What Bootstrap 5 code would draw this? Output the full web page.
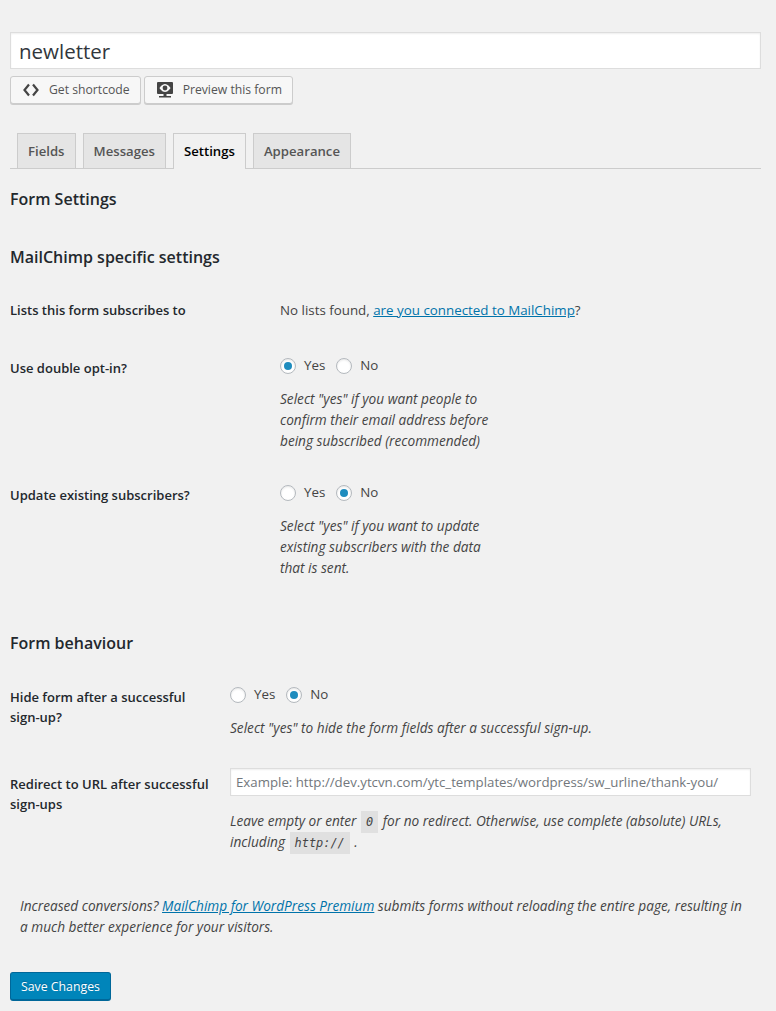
<!DOCTYPE html>
<html lang="en"><head><meta charset="utf-8"><title>Form settings</title>
<link rel="stylesheet" href="https://cdn.jsdelivr.net/npm/bootstrap@5.3.0/dist/css/bootstrap.min.css">
<style>
html,body{background:#f1f1f1}
body{font-family:"Open Sans","Noto Sans",sans-serif;font-size:13.35px;line-height:21px;color:#444;overflow:hidden}
.wrapx{padding:32px 15px 0 10px;height:1011px}
.titlebox{display:block;width:100%;height:37px;border:1px solid #ddd;background:#fff;font-size:20.500px;line-height:26px;padding:3px 8px;color:#32373c;box-shadow:inset 0 1px 2px rgba(0,0,0,.07);outline:0}
.wpbtn{height:28px;background:#f7f7f7;border:1px solid #ccc;border-radius:3px;box-shadow:0 1px 0 #ccc;color:#555;font-size:12.200px;line-height:26px;padding:0 10px 0 12px;display:inline-flex;align-items:center}
.wpbtn svg{margin-right:10px;flex:none}
.tabbar{margin-top:29px;border-bottom:1px solid #ccc;padding-left:7px;height:36px;gap:7px}
.tabx{height:35px;border:1px solid #ccc;border-bottom:0;background:#e5e5e5;color:#555;font-weight:600;font-size:13.170px;line-height:34px;padding:0 10px;text-decoration:none}
.tabx.on{background:#f1f1f1;color:#000;height:36px;position:relative;z-index:1}
h3.headx{font-size:16px;line-height:22px;font-weight:600;color:#23282d;margin:0}
.rowx{display:flex}
.lblx{width:270px;flex:none;font-weight:600;color:#23282d;font-size:13px;line-height:20px}
.lblx.narrow{width:220px}
.hintx{font-style:italic;color:#444;margin:0;line-height:21px;font-size:13.650px}
.radx{display:inline-flex;align-items:center;margin-right:11px}
.dotx{width:16px;height:16px;border:1px solid #b4b9be;border-radius:50%;background:#fff;box-shadow:inset 0 1px 2px rgba(0,0,0,.1);margin-right:8px;display:flex;align-items:center;justify-content:center;flex:none}
.dotx.sel::after{content:"";width:8px;height:8px;border-radius:50%;background:#1e8cbe}
a.lnkx{color:#0073aa;text-decoration:underline}
.codex{font-family:"DejaVu Sans Mono","Liberation Mono",monospace;font-size:11.900px;line-height:1;background:rgba(0,0,0,.07);color:#444;padding:4px 5px;margin:0 1px}
.urlx{display:block;width:521px;height:28px;border:1px solid #ddd;background:#fff;padding:2px 5px;font-size:13.250px;font-family:inherit;box-shadow:inset 0 1px 2px rgba(0,0,0,.07);outline:0}
.urlx::placeholder{color:#72777c;opacity:1}
.savex{height:29px;background:#0085ba;border:1px solid #006799;border-bottom-width:2px;border-radius:3px;color:#fff;font-size:12.300px;line-height:25px;padding:0 10px;text-shadow:0 -1px 1px #006799}
</style></head><body>
<div class="wrapx">
<input class="titlebox" value="newletter" aria-label="Form title">
<div class="d-flex" style="gap:3px;margin-top:7px">
<button class="wpbtn" type="button"><svg width="16" height="14" viewBox="0 0 16 14"><path d="M6 1.500 1.500 7 6 12.500M10 1.500 14.500 7 10 12.500" fill="none" stroke="#444" stroke-width="2.200"/></svg>Get shortcode</button>
<button class="wpbtn" type="button"><svg width="16" height="16" viewBox="0 0 16 16"><path fill="#444" d="M1 0h14a1 1 0 0 1 1 1v10a1 1 0 0 1-1 1H1a1 1 0 0 1-1-1V1a1 1 0 0 1 1-1zM6.500 12h3v2h-3zM2 14h12v1.500H2z"/><path fill="#f7f7f7" d="M8 2C4.800 2 2.500 6 2.500 6S4.800 10 8 10s5.500-4 5.500-4S11.200 2 8 2z"/><circle cx="8" cy="6" r="2.400" fill="#444"/></svg>Preview this form</button>
</div>
<nav class="d-flex tabbar">
<a class="tabx" href="#">Fields</a><a class="tabx" href="#">Messages</a><a class="tabx on" href="#">Settings</a><a class="tabx" href="#">Appearance</a>
</nav>
<h3 class="headx" style="margin-top:19px">Form Settings</h3>
<h3 class="headx" style="margin-top:36px">MailChimp specific settings</h3>
<div class="rowx" style="margin-top:32px"><div class="lblx">Lists this form subscribes to</div><div>No lists found, <a class="lnkx" href="#">are you connected to MailChimp</a>?</div></div>
<div class="rowx" style="margin-top:34px"><div class="lblx" style="padding-top:3px">Use double opt-in?</div><div>
<div class="d-flex"><label class="radx"><span class="dotx sel"></span>Yes</label><label class="radx"><span class="dotx"></span>No</label></div>
<p class="hintx" style="margin-top:12px">Select "yes" if you want people to<br>confirm their email address before<br>being subscribed (recommended)</p></div></div>
<div class="rowx" style="margin-top:31px"><div class="lblx" style="padding-top:3px">Update existing subscribers?</div><div>
<div class="d-flex"><label class="radx"><span class="dotx"></span>Yes</label><label class="radx"><span class="dotx sel"></span>No</label></div>
<p class="hintx" style="margin-top:12px">Select "yes" if you want to update<br>existing subscribers with the data<br>that is sent.</p></div></div>
<h3 class="headx" style="margin-top:54px">Form behaviour</h3>
<div class="rowx" style="margin-top:30px"><div class="lblx narrow" style="padding-top:3px">Hide form after a successful<br>sign-up?</div><div>
<div class="d-flex"><label class="radx"><span class="dotx"></span>Yes</label><label class="radx"><span class="dotx sel"></span>No</label></div>
<p class="hintx" style="margin-top:12px">Select "yes" to hide the form fields after a successful sign-up.</p></div></div>
<div class="rowx" style="margin-top:30px"><div class="lblx narrow" style="padding-top:6px">Redirect to URL after successful<br>sign-ups</div><div>
<input class="urlx" placeholder="Example: http://dev.ytcvn.com/ytc_templates/wordpress/sw_urline/thank-you/" aria-label="Redirect URL">
<p class="hintx" style="margin-top:14px">Leave empty or enter <code class="codex">0</code> for no redirect. Otherwise, use complete (absolute) URLs,<br>including <code class="codex">http://</code> .</p></div></div>
<p class="hintx" style="margin:43px 0 0 10px">Increased conversions? <a class="lnkx" href="#">MailChimp for WordPress Premium</a> submits forms without reloading the entire page, resulting in<br>a much better experience for your visitors.</p>
<button class="savex" type="button" style="margin-top:35px">Save Changes</button>
</div>
<script src="https://cdn.jsdelivr.net/npm/bootstrap@5.3.0/dist/js/bootstrap.bundle.min.js"></script>
</body></html>
